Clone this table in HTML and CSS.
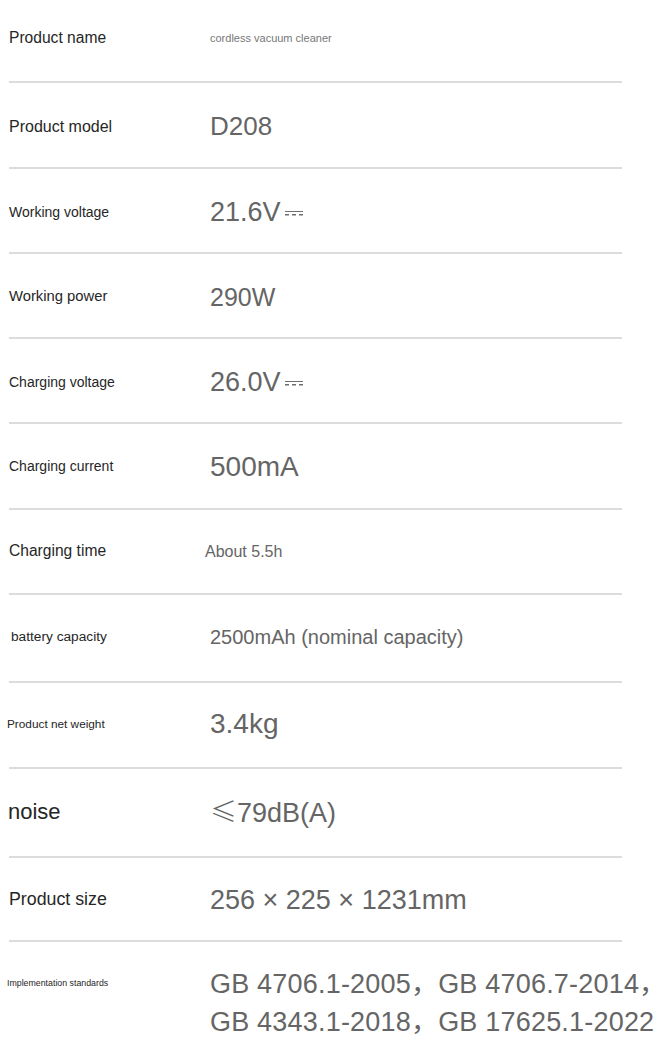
FILE: index.html
```html
<!DOCTYPE html>
<html lang="en">
<head>
<meta charset="utf-8">
<title>Specifications</title>
<link rel="stylesheet" href="styles.css">
</head>
<body>
<div class="specs">
  <div class="row r1">
    <div class="label l-name">Product name</div>
    <div class="value v-small">cordless vacuum cleaner</div>
  </div>
  <div class="row r2">
    <div class="label l-model">Product model</div>
    <div class="value v-26">D208</div>
  </div>
  <div class="row r3">
    <div class="label l-14">Working voltage</div>
    <div class="value v-27">21.6V<span class="dc" aria-label="DC"></span></div>
  </div>
  <div class="row r4">
    <div class="label l-15">Working power</div>
    <div class="value v-25">290W</div>
  </div>
  <div class="row r5">
    <div class="label l-14">Charging voltage</div>
    <div class="value v-27">26.0V<span class="dc" aria-label="DC"></span></div>
  </div>
  <div class="row r6">
    <div class="label l-14">Charging current</div>
    <div class="value v-28">500mA</div>
  </div>
  <div class="row r7">
    <div class="label l-16">Charging time</div>
    <div class="value v-16 v-shift">About 5.5h</div>
  </div>
  <div class="row r8">
    <div class="label l-battery">battery capacity</div>
    <div class="value v-20">2500mAh (nominal capacity)</div>
  </div>
  <div class="row r9">
    <div class="label l-weight">Product net weight</div>
    <div class="value v-28">3.4kg</div>
  </div>
  <div class="row r10">
    <div class="label l-noise">noise</div>
    <div class="value v-27"><span class="cjk">≤</span>79dB(A)</div>
  </div>
  <div class="row r11">
    <div class="label l-size">Product size</div>
    <div class="value v-27">256 × 225 × 1231mm</div>
  </div>
  <div class="row row-last">
    <div class="label l-std">Implementation standards</div>
    <div class="value v-std">GB 4706.1-2005，GB 4706.7-2014，<br>GB 4343.1-2018，GB 17625.1-2022</div>
  </div>
</div>
</body>
</html>
```

FILE: styles.css
```css
html, body {
  margin: 0;
  padding: 0;
  background: #ffffff;
}

body {
  font-family: "Liberation Sans", Arial, "Noto Sans CJK SC", sans-serif;
  width: 669px;
  height: 1050px;
  overflow: hidden;
}

.specs {
  margin-left: 9px;
  width: 613px;
}

.row {
  box-sizing: border-box;
  display: grid;
  grid-template-columns: 201px 1fr;
  align-items: center;
  border-bottom: 2px solid #dcdcdc;
  padding-top: 3px;
}

.r1 { height: 83px; padding-top: 0; padding-bottom: 4px; }
.r2 { height: 86px; }
.r3 { height: 85px; }
.r4 { height: 85px; }
.r5 { height: 85px; }
.r6 { height: 86px; padding-top: 1px; }
.r7 { height: 85px; padding-top: 0; }
.r8 { height: 88px; padding-top: 0; padding-bottom: 2px; }
.r9 { height: 86px; padding-top: 0; padding-bottom: 2px; }
.r10 { height: 89px; padding-top: 0; }
.r11 { height: 84px; padding-top: 2px; }

.label {
  color: #262626;
  white-space: nowrap;
  line-height: 1.2;
}

.l-name { font-size: 15.6px; }
.l-model { font-size: 16px; }
.l-14 { font-size: 14px; }
.l-15 { font-size: 14.8px; }
.l-16 { font-size: 15.6px; }
.l-battery { font-size: 13.7px; margin-left: 2px; }
.l-weight { font-size: 11.8px; margin-left: -2px; }
.l-noise { font-size: 22px; margin-left: -1px; }
.l-size { font-size: 17.8px; }
.l-std { font-size: 8.8px; margin-left: -2px; margin-top: 13px; }

.value {
  color: #656565;
  white-space: nowrap;
  line-height: 1.2;
}

.v-small { font-size: 11px; color: #777777; }
.v-16 { font-size: 16px; }
.v-20 { font-size: 20px; }
.v-25 { font-size: 25px; }
.v-26 { font-size: 26px; }
.v-27 { font-size: 27px; }
.v-28 { font-size: 28px; }
.v-shift { margin-left: -5px; }

.cjk {
  font-family: "Noto Sans CJK SC", sans-serif;
  font-weight: 300;
}

.dc {
  display: inline-block;
  width: 18px;
  height: 4px;
  margin-left: 4px;
  vertical-align: 0.18em;
  border-top: 1.5px solid #6e6e6e;
  background: repeating-linear-gradient(90deg, #6e6e6e 0 4px, transparent 4px 7px) bottom / 100% 1.5px no-repeat;
}

.row-last {
  border-bottom: none;
  align-items: start;
  padding-top: 23px;
  height: 107px;
}

.v-std {
  font-size: 27px;
  line-height: 38px;
  letter-spacing: 0.2px;
}
```
